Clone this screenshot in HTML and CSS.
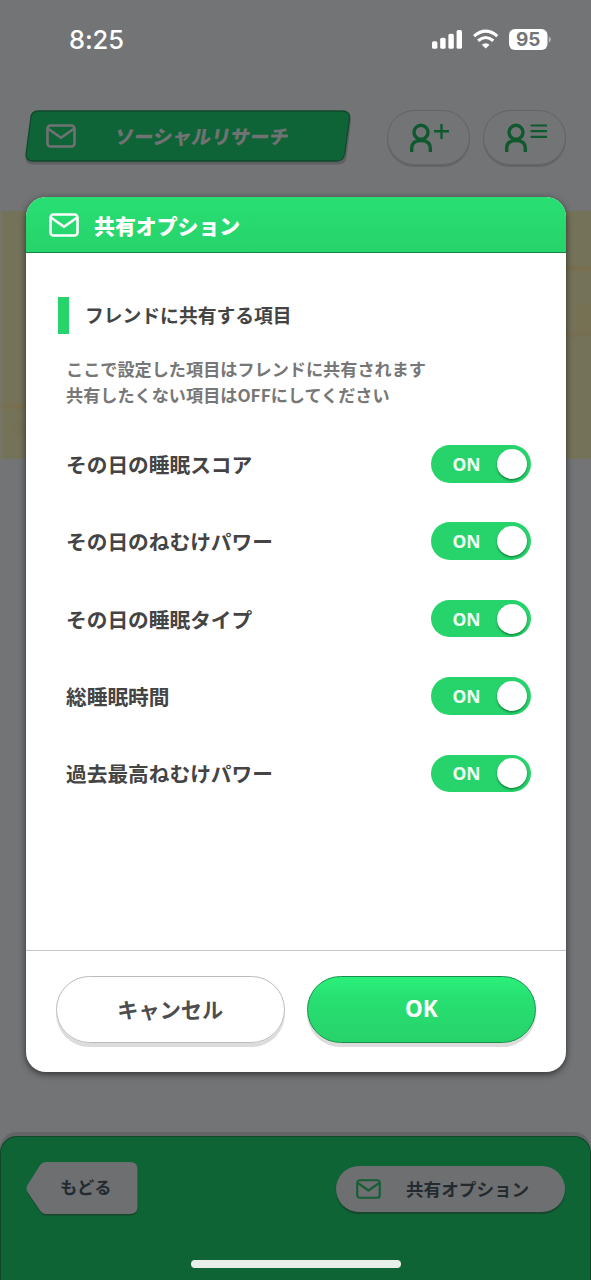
FILE: index.html
```html
<!DOCTYPE html>
<html lang="ja">
<head>
<meta charset="utf-8">
<title>共有オプション</title>
<link rel="stylesheet" href="styles.css">
</head>
<body>
<svg class="defs" width="0" height="0">
  <symbol id="mail" viewBox="0 0 30 24">
    <rect x="1.5" y="1.5" width="27" height="21" rx="3" fill="none" stroke="currentColor" stroke-width="2.6"/>
    <path d="M2.5 5 L15 13.8 L27.5 5" fill="none" stroke="currentColor" stroke-width="2.6" stroke-linejoin="round"/>
  </symbol>
</svg>
<div class="screen">
  <div class="status">
    <span class="clock">8:25</span>
    <svg class="indicators" width="120" height="24" viewBox="0 0 120 24">
      <g fill="#fff">
        <rect x="0" y="13.3" width="5.4" height="7.5" rx="1.6"/>
        <rect x="8.2" y="9.7" width="5.4" height="11.1" rx="1.6"/>
        <rect x="16.4" y="5.8" width="5.4" height="15" rx="1.6"/>
        <rect x="24.6" y="2" width="5.4" height="18.8" rx="1.6"/>
        <path d="M53.7 20.6 L49.8 16.7 Q53.7 13.6 57.6 16.7 Z"/>
        <rect x="77" y="1" width="38.5" height="21" rx="6"/>
        <path d="M116.8 8.3 Q119 9.5 119 11.5 Q119 13.6 116.8 14.8 Z" opacity=".5"/>
      </g>
      <g fill="none" stroke="#fff" stroke-width="3.1">
        <path d="M42.1 8.1 Q53.7 -1.9 65.3 8.1"/>
        <path d="M46.1 12.7 Q53.7 6.3 61.3 12.7"/>
      </g>
      <text class="level" x="96.2" y="18.2" text-anchor="middle">95</text>
    </svg>
  </div>

  <div class="toolbar">
    <div class="research">
      <svg class="plate" width="328" height="56" viewBox="0 0 328 56">
        <path d="M9 3.5H318Q327 3.5 325.8 12L321.4 48Q320.4 54.5 313 54.5H8Q-.5 54.5.6 46L6.200 9Q7 3.500 13 3.500Z" fill="#5e5f61"/>
        <path d="M13 1H317Q325.500 1 324.500 9L319.600 44Q318.500 51 311.500 51H8Q.2 51 1.200 43L5.800 8Q6.600 1 13 1Z" fill="#0e6436" stroke="#12482d" stroke-width="1.300"/>
      </svg>
      <svg class="icon"><use href="#mail"/></svg>
      <span class="research-label">ソーシャルリサーチ</span>
    </div>
    <div class="round">
      <svg width="42" height="32" viewBox="0 0 42 32" fill="none" stroke="#10592f" stroke-width="3.400">
        <circle cx="13" cy="10.300" r="7"/><path d="M3.700 30V26Q3.700 18.600 13 18.600T22.300 26V30"/>
        <path d="M26 9.300H41M33.500 2V17" stroke-width="2.400"/>
      </svg>
    </div>
    <div class="round">
      <svg width="44" height="32" viewBox="0 0 44 32" fill="none" stroke="#10592f" stroke-width="3.400">
        <circle cx="13" cy="10.300" r="7"/><path d="M3.700 30V26Q3.700 18.600 13 18.600T22.300 26V30"/>
        <path d="M27.500 3.500H44M27.500 9.200H44M27.500 14.900H44" stroke-width="2.200"/>
      </svg>
    </div>
  </div>

  <div class="band">
    <div class="band-left"><i class="band-rule"></i><i class="band-mark"></i></div>
    <div class="band-right"><i class="band-rule"></i><i class="band-mark"></i><i class="band-rule second"></i></div>
  </div>

  <div class="bottom">
    <div class="back">
      <svg class="plate" width="114" height="56" viewBox="0 0 114 56">
        <path d="M20 3H104Q111.500 3 111.500 10V47Q111.500 54.500 104 54.500H20Q16.500 54.500 14 51L2 33Q0 29 2 25L13.500 7Q16 3 20 3Z" fill="#17452d"/>
        <path d="M20 1H104Q111.500 1 111.500 8V45.500Q111.500 53 104 53H20Q16.500 53 14 49.500L1.500 31Q-.5 27.500 1.500 24L13.500 5Q16 1 20 1Z" fill="#6d6f70"/>
      </svg>
      <span class="back-label">もどる</span>
    </div>
    <div class="share">
      <svg class="icon-small"><use href="#mail"/></svg>
      <span>共有オプション</span>
    </div>
  </div>

  <div class="modal">
    <div class="modal-head">
      <svg class="icon"><use href="#mail"/></svg>
      <span>共有オプション</span>
    </div>
    <div class="modal-body">
      <div class="section">フレンドに共有する項目</div>
      <p class="note">ここで設定した項目はフレンドに共有されます<br>共有したくない項目はOFFにしてください</p>
      <div class="rows">
        <div class="row"><span>その日の睡眠スコア</span><div class="toggle"><span>ON</span><i class="knob"></i></div></div>
        <div class="row"><span>その日のねむけパワー</span><div class="toggle"><span>ON</span><i class="knob"></i></div></div>
        <div class="row"><span>その日の睡眠タイプ</span><div class="toggle"><span>ON</span><i class="knob"></i></div></div>
        <div class="row"><span>総睡眠時間</span><div class="toggle"><span>ON</span><i class="knob"></i></div></div>
        <div class="row"><span>過去最高ねむけパワー</span><div class="toggle"><span>ON</span><i class="knob"></i></div></div>
      </div>
    </div>
    <div class="modal-foot">
      <div class="btn cancel">キャンセル</div>
      <div class="btn ok">OK</div>
    </div>
  </div>
  <div class="home-bar"></div>
</div>
</body>
</html>
```
FILE: styles.css
```css
* { box-sizing: border-box; }
body {
  margin: 0;
  font-family: "Noto Sans CJK JP", sans-serif;
  font-weight: 700;
  color: #444;
}
span, .section, .note { white-space: nowrap; }
.defs { position: absolute; }
.screen {
  position: relative;
  width: 591px;
  height: 1280px;
  overflow: hidden;
  display: flex;
  flex-direction: column;
  background: #737476;
}

.status {
  height: 110px;
  padding: 27px 39px 0 69px;
  display: flex;
  justify-content: space-between;
  align-items: flex-start;
}
.clock {
  font: 500 25.5px/26px Inter, sans-serif;
  letter-spacing: -0.1px;
  color: #fff;
}
.indicators { margin-top: 1px; }
.level {
  font: 700 19px Inter, sans-serif;
  fill: #747577;
}

.toolbar {
  height: 101px;
  padding-left: 25px;
  display: flex;
  align-items: flex-start;
}
.research {
  position: relative;
  width: 328px;
  height: 52px;
  margin-right: 34px;
  padding-left: 21px;
  display: flex;
  align-items: center;
  color: #707273;
}
.plate { position: absolute; left: 0; top: 0; }
.icon { position: relative; width: 30px; height: 24px; flex: none; }
.research-label {
  position: relative;
  margin-left: 39px;
  font-size: 19.4px;
  font-weight: 900;
  line-height: 28px;
  transform: skewX(-10deg);
}
.round {
  width: 83px;
  height: 55px;
  margin-right: 13px;
  border: 1.500px solid #626365;
  border-radius: 28px;
  box-shadow: 0 2px 0 #626365;
  display: flex;
  justify-content: center;
  align-items: center;
}

.band {
  height: 248px;
  display: flex;
  justify-content: space-between;
  background: #74735a;
}
.band-left, .band-right { width: 26px; display: flex; flex-direction: column; }
.band-left { padding-top: 193px; border-left: 2px solid #747568; }
.band-right { padding-top: 55px; }
.band-rule { height: 5px; background: #776f50; }
.band-left .band-mark { margin: 13px 0 0 8px; height: 15px; background: #757053; opacity: .6; }
.band-right .band-mark { margin: 34px 0 0 10px; height: 27px; background: #777154; }
.band-right .second { background: #776f53; }

.bottom {
  margin-top: 677px;
  height: 144px;
  flex: none;
  padding: 24px 25px 0;
  display: flex;
  justify-content: space-between;
  border: 1.500px solid #10472b;
  border-bottom: 0;
  border-radius: 17px 17px 0 0;
  background: #0e6434;
  box-shadow: 0 -4px 0 #646567;
  color: #242b30;
}
.band + .bottom { margin-top: 677px; }
.back { position: relative; width: 112px; height: 54px; }
.back-label {
  position: relative;
  display: block;
  padding-left: 34px;
  font-size: 17.300px;
  line-height: 52px;
}
.share {
  width: 229px;
  height: 46px;
  margin-top: 5px;
  padding-left: 20px;
  display: flex;
  align-items: center;
  gap: 25px;
  border-radius: 23px;
  background: #6d6f70;
  box-shadow: 0 2px 1px #17452d;
  font-size: 17.600px;
  line-height: 26px;
}
.icon-small { width: 25px; height: 20px; color: #155e36; }

.modal {
  position: absolute;
  left: 26px;
  top: 197px;
  width: 539.500px;
  height: 875px;
  display: flex;
  flex-direction: column;
  overflow: hidden;
  border-radius: 20px;
  background: #fff;
}
.modal {
  box-shadow: 0 2px 7px rgba(0, 0, 0, .6);
}
.modal-head {
  height: 56px;
  padding-left: 23px;
  display: flex;
  align-items: center;
  gap: 15px;
  background: linear-gradient(#28df73, #27d36b);
  border-bottom: 1.500px solid #138447;
  color: #fff;
  font-size: 20.900px;
  font-weight: 900;
  line-height: 30px;
}
.modal-body { flex: 1; padding: 44px 35px 0 32px; }
.section {
  height: 37px;
  padding-left: 16px;
  border-left: 11px solid #27d36b;
  font-size: 18.800px;
  line-height: 36px;
}
.note {
  margin: 22px 0 0 8px;
  font-size: 17.150px;
  line-height: 26px;
  color: #777;
}
.rows {
  margin: 37px 0 0 8px;
  display: grid;
  gap: 39.800px;
}
.row {
  height: 37.600px;
  display: flex;
  justify-content: space-between;
  align-items: center;
  font-size: 20.700px;
  line-height: 30px;
}
.toggle {
  width: 100px;
  height: 37.500px;
  padding: 0 4px 0 22px;
  display: flex;
  align-items: center;
  justify-content: space-between;
  border-radius: 19px;
  background: #27d36b;
  color: #f0fff5;
  font: 700 17.500px/24px "Noto Sans", sans-serif;
}
.knob {
  width: 30px;
  height: 30px;
  border-radius: 50%;
  background: #fff;
  box-shadow: 0 1.500px 2px rgba(0, 70, 30, .55);
}
.modal-foot {
  height: 122px;
  padding: 25px 30px 0;
  display: flex;
  justify-content: space-between;
  border-top: 1px solid #c4c6c5;
}
.btn {
  width: 228.500px;
  height: 66.500px;
  border-radius: 34px;
  border: 1.500px solid #bbb;
  box-shadow: 0 4px 0 #dcdcdc;
  text-align: center;
  line-height: 63px;
  font-size: 21.200px;
  color: #4d4d4d;
}
.ok {
  border-color: #168f4c;
  background: linear-gradient(#2bef7b, #27df71 35%, #27d36b);
  color: #fff;
  font-family: "Noto Sans", sans-serif;
  font-size: 22.500px;
}
.home-bar {
  position: absolute;
  left: 190.500px;
  top: 1260px;
  width: 210px;
  height: 8px;
  border-radius: 4px;
  background: #e8efeb;
}
```
